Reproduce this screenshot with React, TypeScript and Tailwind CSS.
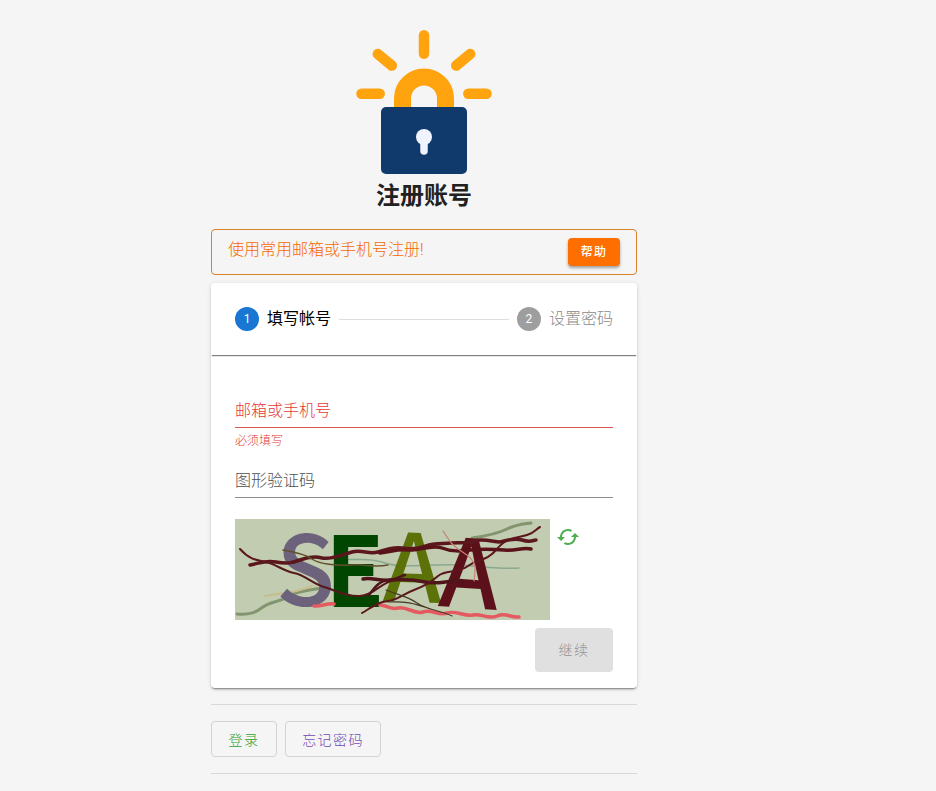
import { useState } from "react";
import type { ReactNode } from "react";
import { MdCached } from "react-icons/md";

function Logo() {
  return (
    <svg viewBox="356 30 136 144" className="mx-auto block h-36 w-[136px]" role="img" aria-label="Logo">
      <g stroke="#ffa30f" strokeWidth="10.5" strokeLinecap="round" fill="none">
        <path d="M424 35.3V53.7" />
        <path d="M361.5 93.7H379.7" />
        <path d="M468.3 93.7H486.5" />
        <path d="M377.8 54L391.8 65.6" />
        <path d="M470.2 54L456.2 65.6" />
      </g>
      <path d="M402.5 110V98.5a21.5 21.5 0 0 1 43 0V110" fill="none" stroke="#ffa30f" strokeWidth="17" />
      <rect x="381" y="107" width="86" height="67" rx="5" fill="#10396c" />
      <circle cx="424" cy="137" r="8" fill="#f0f4ff" />
      <path d="M424 140V151" stroke="#f0f4ff" strokeWidth="7.5" strokeLinecap="round" />
    </svg>
  );
}

function Captcha() {
  return (
    <svg
      viewBox="0 0 315 101"
      className="block h-[101px] w-[315px] shrink-0 overflow-visible bg-[#c1ccb1] font-['Noto_Sans_CJK_SC',sans-serif] font-medium"
      role="img"
      aria-label="图形验证码"
    >
      <g fill="none" strokeLinecap="round" strokeLinejoin="round">
        <path d="M2 95c12 1 18-1 26-7s17-5 24-10 20-7 35-9" stroke="#83956f" strokeWidth="3" />
        <path d="M30 77c18-3 31-3 47-10" stroke="#c8bd8d" strokeWidth="2" />
        <path d="M237 19c14-2 25-4 35-9s18-5 24-6" stroke="#83956f" strokeWidth="3" />
        <path d="M108 40c16 2 25-2 42 4s49 0 75 2 38 4 59 3" stroke="#8ba890" strokeWidth="1.5" />
      </g>
      <g fontSize="97">
        <text x="41" y="87" fill="#6c627b">S</text>
        <text x="90" y="88" fill="#004600" className="font-bold">E</text>
        <text x="149" y="83" fontSize="94" fill="#5c7208" transform="rotate(2 176 50)">A</text>
        <text x="205" y="89" fontSize="95" fill="#5c1019" transform="rotate(4 233 55)">A</text>
      </g>
      <g fill="none" strokeLinecap="round" strokeLinejoin="round">
        <path d="M79 87c7 1 12-3 20-2M145 86c7 0 9 5 18 3s17 7 25 4 16 4 24 1 18 4 26 2 15 5 24 1 13 2 22 1" stroke="#e45a60" strokeWidth="3.5" />
        <path d="M5 30c8 9 14 11 26 13" stroke="#5b171c" strokeWidth="2" />
        <path d="M15 46c11-2 15-5 26-3s16 1 24-2 14-4 22-2 20-3 30-6 17 3 26 0 17-5 24-4 16 1 24-2 17-2 25-3 18 1 24-2 20 1 24 1 14-5 23-2 11 0 14 0" stroke="#5b171c" strokeWidth="3.5" />
        <path d="M31 43c10 2 17 9 28 11s19 11 30 14 21 10 36 9 19-13 35-16" stroke="#56181c" strokeWidth="2" />
        <path d="M48 31c12 2 22 4 29 9s25 7 40 6 20 3 36 0" stroke="#60502b" strokeWidth="1.5" />
        <path d="M145 34c14-2 18-4 28-3s24-6 34-2 19 3 28 2 22-1 34 0 19-3 27-1" stroke="#581218" strokeWidth="3.5" />
        <path d="M128 60c8-2 15 2 27 1s22-1 35 2 23-2 35-1" stroke="#50151a" strokeWidth="3.5" />
        <path d="M134 76c6-8 10-14 20-15s10-4 16-5" stroke="#50151a" strokeWidth="2.5" />
        <path d="M127 94c10-6 16-11 26-12s15-7 26-11 16-7 24-14 19-2 30-10 18-4 29-17 21-11 30-14 9-6 13-8" stroke="#5c171d" strokeWidth="2" />
        <path d="M208 12c7 10 8 14 21 22s12 15 10 28" stroke="#c98375" strokeWidth="1.2" />
        <path d="M151 71c15 6 21 6 31 13s22 7 35 13M153 83c17-1 25 1 43 7" stroke="#463724" strokeWidth="1.2" />
      </g>
    </svg>
  );
}

type FieldProps = { id: string; label: string; error?: string };

function Field({ id, label, error }: FieldProps) {
  const [value, setValue] = useState("");
  return (
    <div className="h-[70px]">
      <div className={`grid h-9 items-center border-b pt-0.5 ${error ? "border-[#d35757]" : "border-[#8c8c8c]"}`}>
        <label
          htmlFor={id}
          className={`col-start-1 row-start-1 leading-6 ${value ? "invisible" : ""} ${error ? "text-[#e53935]" : "text-[#505050]"}`}
        >
          {label}
        </label>
        <input
          id={id}
          value={value}
          onChange={(e) => setValue(e.target.value)}
          className="col-start-1 row-start-1 h-8 w-full bg-transparent outline-none"
        />
      </div>
      {error && <p className="mt-[5px] text-xs leading-4 text-[#e53935]">{error}</p>}
    </div>
  );
}

function Step({ number, active, children }: { number: number; active?: boolean; children: ReactNode }) {
  return (
    <div className={`flex items-center gap-2 ${active ? "font-normal text-black" : "text-[#8a8a8a]"}`}>
      <span
        className={`flex size-6 items-center justify-center rounded-full text-xs font-normal text-white ${active ? "bg-[#1976d2]" : "bg-[#9e9e9e]"}`}
      >
        {number}
      </span>
      <span className="leading-6">{children}</span>
    </div>
  );
}

export default function App() {
  return (
    <div className="min-h-screen bg-[#f5f5f5] pr-[88px] font-[Roboto,'Noto_Sans_CJK_SC',sans-serif] text-base font-light text-black">
      <main className="mx-auto w-full max-w-[426px] pt-[30px]">
        <Logo />
        <h1 className="mt-1 text-center text-2xl leading-9 font-bold text-[#212121]">注册账号</h1>

        <div className="mt-[15px] flex items-start justify-between rounded border border-[#d9822b] px-4 py-2 text-[#f56a00]">
          <p className="leading-6">使用常用邮箱或手机号注册!</p>
          <button className="h-7 w-[52px] rounded bg-[#ff6f00] text-xs font-medium tracking-widest text-white shadow-[0_2px_3px_rgba(0,0,0,0.35)]">
            帮助
          </button>
        </div>

        <section className="mt-2 rounded bg-white shadow-[0_2px_2px_-1px_rgba(0,0,0,0.45),0_1px_4px_rgba(0,0,0,0.15)]">
          <div className="flex h-18 items-center gap-2 px-6 shadow-[0_2px_1px_-1px_rgba(0,0,0,0.5)]">
            <Step number={1} active>填写帐号</Step>
            <div className="h-px flex-1 bg-[#dedede]" />
            <Step number={2}>设置密码</Step>
          </div>
          <form className="px-6 pt-[37px] pb-4" onSubmit={(e) => e.preventDefault()}>
            <Field id="account" label="邮箱或手机号" error="必须填写" />
            <Field id="captcha" label="图形验证码" />
            <div className="-mt-[13px] flex items-start gap-1.5">
              <Captcha />
              <button type="button" aria-label="刷新" className="mt-1.5 text-[#4caf50]">
                <MdCached className="size-6" />
              </button>
            </div>
            <div className="mt-2 flex justify-end">
              <button disabled className="h-11 w-[78px] rounded bg-[#e0e0e0] text-sm tracking-widest text-[#959595]">
                继续
              </button>
            </div>
          </form>
        </section>

        <hr className="mt-4 border-[#d8d8d8]" />
        <nav className="my-4 flex gap-2 text-sm tracking-widest">
          <button className="h-9 w-[66px] rounded border border-[#d3d3d3] pt-px text-[#2ea033]">登录</button>
          <button className="h-9 w-24 rounded border border-[#d3d3d3] pt-px text-[#6f48b8]">忘记密码</button>
        </nav>
        <hr className="border-[#d8d8d8]" />
      </main>
    </div>
  );
}
